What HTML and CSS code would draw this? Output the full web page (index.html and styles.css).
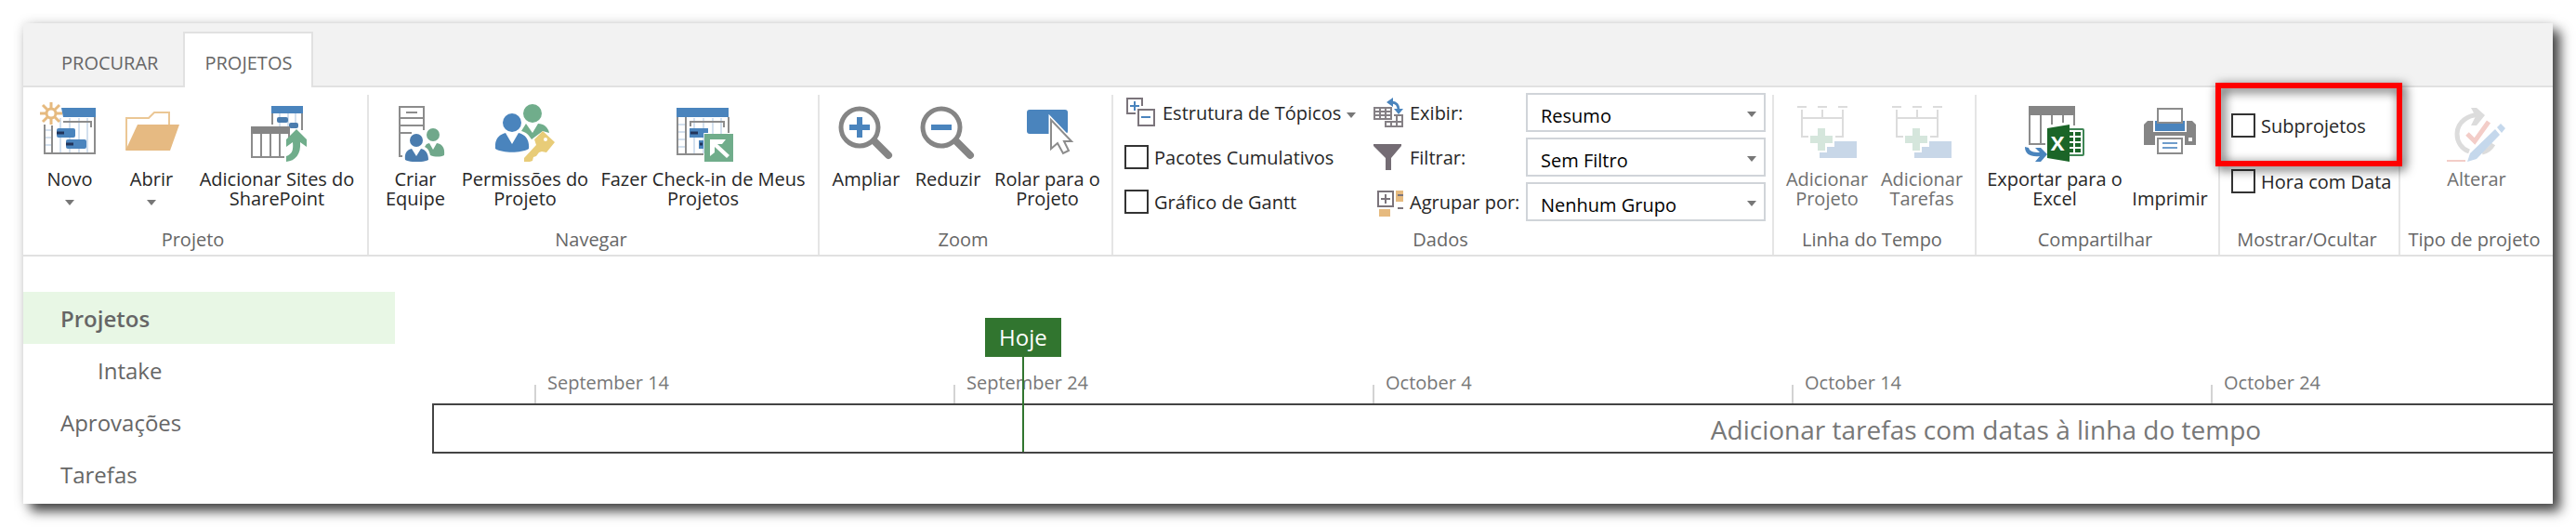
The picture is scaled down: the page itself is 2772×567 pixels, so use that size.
FILE: index.html
```html
<!DOCTYPE html>
<html lang="pt-BR">
<head>
    <meta charset="UTF-8">
    <meta name="viewport" content="width=device-width, initial-scale=1.0">
    <title>Projetos</title>
    <link rel="stylesheet" href="styles.css">
</head>
<body>

<div class="window">
    <nav class="tabs">
        <a href="#procurar">PROCURAR</a>
        <a href="#projetos" class="active">PROJETOS</a>
    </nav>

    <div class="ribbon">
        <!-- Projeto -->
        <section class="group">
            <div class="tools">
                <button class="tool w-small">
                    <svg viewBox="0 0 64 64">
                        <path d="M22 17v38M32 17v38M42 17v38M51 17v38M5 30h8M5 38h8M5 46h8" stroke="#d3e0ee" stroke-width="2"/>
                        <path d="M5 24v31h54V16M13 25v30" fill="none" stroke="#8c8c8c" stroke-width="2"/>
                        <path d="M25 21h30v6" fill="none" stroke="#8c8c8c" stroke-width="2"/>
                        <path d="M23 6h37v10H25z" fill="#4a84bd"/>
                        <rect x="18" y="28" width="20" height="10" rx="2" fill="#4a84bd"/>
                        <rect x="28" y="40" width="22" height="10" rx="2" fill="#4a84bd"/>
                        <path d="M18 33h8M28 45h8" stroke="#22345a" stroke-width="3"/>
                        <circle cx="12" cy="12" r="5" fill="#fff" stroke="#e6ba7f" stroke-width="3"/>
                        <path d="M12 0v6M12 18v6M0 12h6M18 12h6M3 3l5 5M16 16l5 5M21 3l-5 5M8 16l-5 5" stroke="#e6ba7f" stroke-width="3"/>
                    </svg>
                    <span>Novo</span>
                    <i class="arrow"></i>
                </button>
                <button class="tool w-small">
                    <svg viewBox="0 0 64 64">
                        <path d="M5 51V17h24l6-6h16v14" fill="none" stroke="#ebc795" stroke-width="2"/>
                        <path d="M17 24h45L52 52H4z" fill="#e6ba82"/>
                    </svg>
                    <span>Abrir</span>
                    <i class="arrow"></i>
                </button>
                <button class="tool w-sites">
                    <svg viewBox="0 0 64 64">
                        <path d="M35 12v14M44 12v14M52 12v14" stroke="#d3e0ee" stroke-width="2"/>
                        <path d="M27 12v12M59 12v18" stroke="#8c8c8c" stroke-width="2"/>
                        <path d="M26 4h34v8H26z" fill="#4a84bd"/>
                        <rect x="32" y="16" width="12" height="6" rx="2" fill="#4a7cae"/>
                        <rect x="45" y="22" width="10" height="6" rx="2" fill="#4a7cae"/>
                        <path d="M5 34v25h35M15 34v24M25 34v24M35 34v24M45 34v6" fill="none" stroke="#8c8c8c" stroke-width="2"/>
                        <path d="M4 26h42v8H4z" fill="#858585"/>
                        <path d="M53 29l11 11v8l-7-5c1 13-5 20-15 21v-6c6-2 8-6 7-15l-7 5v-8z" fill="#70ad8b"/>
                    </svg>
                    <span>Adicionar Sites do<br>SharePoint</span>
                </button>
            </div>
            <h2>Projeto</h2>
        </section>

        <!-- Navegar -->
        <section class="group">
            <div class="tools">
                <button class="tool w-small">
                    <svg viewBox="0 0 64 64">
                        <path d="M18 58h-3V5h26v25M15 17h26M15 25h26M15 33h13M22 11h12" fill="none" stroke="#8c8c8c" stroke-width="2"/>
                        <circle cx="51" cy="35" r="7" fill="#70a88b"/>
                        <path d="M44 45l3-1 4 7 4-7c6 1 9 5 8 13-4 2-10 2-15 0-1-5-3-8-6-9z" fill="#70a88b"/>
                        <circle cx="33" cy="41" r="7" fill="#4a7cae"/>
                        <path d="M21 62c-1-7 2-11 7-12l5 8 5-8c5 1 8 5 8 12-6 3-19 3-25 0z" fill="#4a7cae"/>
                    </svg>
                    <span>Criar<br>Equipe</span>
                </button>
                <button class="tool w-perm">
                    <svg viewBox="0 0 64 64">
                        <circle cx="40" cy="12" r="10" fill="#70ad8b"/>
                        <path d="M28 31l5-8 7 10 6-10c6 0 11 4 12 10l-7-2-12 9c-3-5-6-8-11-9z" fill="#70ad8b"/>
                        <circle cx="18" cy="22" r="10" fill="#4a84bd"/>
                        <path d="M0 50c-1-9 3-15 11-17l7 12 7-12c8 2 12 8 11 17-8 5-28 5-36 0z" fill="#4a84bd"/>
                        <path d="M51 31l13 12-9 11-5-1-3 1-3 4-3 1-1 4-3 1h-6v-4l13-14-2-6z" fill="#e8cc78"/>
                        <circle cx="54" cy="40" r="2" fill="#fff"/>
                    </svg>
                    <span>Permissões do<br>Projeto</span>
                </button>
                <button class="tool w-checkin">
                    <svg viewBox="0 0 64 64">
                        <path d="M22 17v38M32 17v38M42 17v18M51 17v18M5 24h8M5 32h8M5 40h8M5 48h8" stroke="#d3e0ee" stroke-width="2"/>
                        <path d="M4 16v40h28M13 16v39M59 16v17M18 26v-5h36v6" fill="none" stroke="#8c8c8c" stroke-width="2"/>
                        <path d="M3 6h56v10H3z" fill="#4a84bd"/>
                        <path d="M17 28h20v5h-5v5H17zM27 41h5v9h-5z" fill="#4a84bd"/>
                        <path d="M18 33h8M28 45h3" stroke="#22345a" stroke-width="3"/>
                        <path d="M33 34h31v30H33z" fill="#70ad8b"/>
                        <path d="M39 40h17l-4 5h-5l13 12-3 3-13-12v6l-5 4z" fill="#fff"/>
                    </svg>
                    <span>Fazer Check-in de Meus<br>Projetos</span>
                </button>
            </div>
            <h2>Navegar</h2>
        </section>

        <!-- Zoom -->
        <section class="group">
            <div class="tools">
                <button class="tool w-small">
                    <svg viewBox="0 0 64 64">
                        <circle cx="25" cy="27" r="20" fill="none" stroke="#858585" stroke-width="5"/>
                        <path d="M41 42l15 15" stroke="#858585" stroke-width="8" stroke-linecap="round"/>
                        <path d="M14 27h22M25 16v22" stroke="#4a84bd" stroke-width="6"/>
                    </svg>
                    <span>Ampliar</span>
                </button>
                <button class="tool w-small">
                    <svg viewBox="0 0 64 64">
                        <circle cx="25" cy="27" r="20" fill="none" stroke="#858585" stroke-width="5"/>
                        <path d="M41 42l15 15" stroke="#858585" stroke-width="8" stroke-linecap="round"/>
                        <path d="M14 27h22" stroke="#4a84bd" stroke-width="6"/>
                    </svg>
                    <span>Reduzir</span>
                </button>
                <button class="tool w-scroll">
                    <svg viewBox="0 0 64 64">
                        <rect x="10" y="8" width="44" height="26" rx="3" fill="#4a84bd"/>
                        <path d="M36 19v31l7-6 6 11 6-3-5-10h8z" fill="#fff" stroke="#fff" stroke-width="5"/>
                        <path d="M36 19v31l7-6 6 11 6-3-5-10h8z" fill="#fff" stroke="#8c8c8c" stroke-width="2"/>
                    </svg>
                    <span>Rolar para o<br>Projeto</span>
                </button>
            </div>
            <h2>Zoom</h2>
        </section>

        <!-- Dados -->
        <section class="group data">
            <div class="data-rows">
                <div class="column options">
                    <button class="row outline">
                        <svg viewBox="0 0 32 32">
                            <path d="M10 17H1V1h16v8" fill="none" stroke="#7b747b" stroke-width="2"/>
                            <path d="M4 9h10M9 4v10M16 21h10" stroke="#4a84bd" stroke-width="2"/>
                            <path d="M13 13h17v17H13z" fill="none" stroke="#7b747b" stroke-width="2"/>
                        </svg>
                        <span>Estrutura de Tópicos</span>
                        <i class="arrow"></i>
                    </button>
                    <label class="row"><input type="checkbox">Pacotes Cumulativos</label>
                    <label class="row"><input type="checkbox">Gráfico de Gantt</label>
                </div>
                <div class="column filters">
                    <div class="row">
                        <svg viewBox="0 0 32 32">
                            <path d="M1 11h18v12H1zM1 15h18M1 19h18M7 11v12M13 11v12" fill="none" stroke="#858085" stroke-width="2"/>
                            <path d="M22 19h9v12H13v-5h18M25 19v12M19 26v5" fill="none" stroke="#858085" stroke-width="2"/>
                            <path d="M19 5c6 0 8 3 8 9" fill="none" stroke="#4a84bd" stroke-width="3"/>
                            <path d="M14 5l7-5v10zM27 18l-5-6h10z" fill="#4a84bd"/>
                        </svg>
                        <label for="exibir">Exibir:</label>
                        <div class="select">
                            <select id="exibir"><option>Resumo</option></select>
                        </div>
                    </div>
                    <div class="row">
                        <svg viewBox="0 0 32 32">
                            <path d="M0 2h30v2L19 17v13h-6V17L0 4z" fill="#746c74"/>
                        </svg>
                        <label for="filtrar">Filtrar:</label>
                        <div class="select">
                            <select id="filtrar"><option>Sem Filtro</option></select>
                        </div>
                    </div>
                    <div class="row">
                        <svg viewBox="0 0 32 32">
                            <path d="M5 5h16v16H5zM8 13h10M13 8v10" fill="none" stroke="#7b747b" stroke-width="2"/>
                            <path d="M24 4h8v12h-8zM6 24h12v8H6z" fill="#e6ba7f"/>
                            <path d="M26 9h6M26 23h6" stroke="#7b747b" stroke-width="2"/>
                        </svg>
                        <label for="agrupar">Agrupar por:</label>
                        <div class="select">
                            <select id="agrupar"><option>Nenhum Grupo</option></select>
                        </div>
                    </div>
                </div>
            </div>
            <h2>Dados</h2>
        </section>

        <!-- Linha do Tempo -->
        <section class="group">
            <div class="tools">
                <button class="tool w-add" disabled>
                    <svg viewBox="0 0 64 64">
                        <path d="M0 5h10M22 5h10M44 5h10M5 8v29h7M27 8v9M49 8v29h-8M5 17h44" fill="none" stroke="#dcdcdc" stroke-width="2"/>
                        <path d="M22 28h8v8h8v8h-8v8h-8v-8h-8v-8h8z" fill="#d5e6dc"/>
                        <path d="M40 42h24v18H24v-6h8v-6h8z" fill="#c8d7e8"/>
                    </svg>
                    <span>Adicionar<br>Projeto</span>
                </button>
                <button class="tool w-add" disabled>
                    <svg viewBox="0 0 64 64">
                        <path d="M0 5h10M22 5h10M44 5h10M5 8v29h7M27 8v9M49 8v29h-8M5 17h44" fill="none" stroke="#dcdcdc" stroke-width="2"/>
                        <path d="M22 28h8v8h8v8h-8v8h-8v-8h-8v-8h8z" fill="#d5e6dc"/>
                        <path d="M40 42h24v18H24v-6h8v-6h8z" fill="#c8d7e8"/>
                    </svg>
                    <span>Adicionar<br>Tarefas</span>
                </button>
            </div>
            <h2>Linha do Tempo</h2>
        </section>

        <!-- Compartilhar -->
        <section class="group">
            <div class="tools">
                <button class="tool w-excel">
                    <svg viewBox="0 0 64 64">
                        <path d="M5 13v32h17M17 13v31M29 13v11M41 13v9M53 13v12" fill="none" stroke="#8c8c8c" stroke-width="2"/>
                        <path d="M4 4h50v10H4z" fill="#858585"/>
                        <rect x="46" y="29" width="17" height="28" rx="1" fill="#fff" stroke="#3f8555" stroke-width="2"/>
                        <path d="M48 34h4M48 40h4M48 46h4M48 52h4M54 34h6M54 40h6M54 46h6M54 52h6" stroke="#1b6528" stroke-width="4"/>
                        <path d="M24 28l24-4v40l-24-4z" fill="#1b6528"/>
                        <text x="35" y="52" font-size="22" font-weight="bold" text-anchor="middle" fill="#fff">X</text>
                        <path d="M0 48l4 1c1 4 5 5 12 5l-5-5h6l7 7-7 8h-6l5-6C6 59 0 56 0 48z" fill="#4a84bd"/>
                    </svg>
                    <span>Exportar para o<br>Excel</span>
                </button>
                <button class="tool w-print">
                    <svg viewBox="0 0 64 64">
                        <path d="M8 20h48l4 4v22H4V24z" fill="#858585"/>
                        <path d="M14 18h36v14H14z" fill="#fff"/>
                        <path d="M16 20h32v11H16z" fill="#4a84bd"/>
                        <path d="M19 7h26v15H19z" fill="#fff" stroke="#8c8c8c" stroke-width="2"/>
                        <path d="M16 36h32v10H16z" fill="#fff"/>
                        <path d="M19 39h26v16H19z" fill="#fff" stroke="#8c8c8c" stroke-width="2"/>
                        <path d="M24 44h16M24 49h16" stroke="#6f9ccb" stroke-width="2"/>
                        <path d="M52 38h4v4h-4z" fill="#fff"/>
                    </svg>
                    <span><br>Imprimir</span>
                </button>
            </div>
            <h2>Compartilhar</h2>
        </section>

        <!-- Mostrar/Ocultar -->
        <section class="group show">
            <div class="column checks">
                <label class="row"><input type="checkbox">Subprojetos</label>
                <label class="row"><input type="checkbox">Hora com Data</label>
            </div>
            <h2>Mostrar/Ocultar</h2>
            <div class="highlight"></div>
        </section>

        <!-- Tipo de projeto -->
        <section class="group last">
            <div class="tools">
                <button class="tool w-small" disabled>
                    <svg viewBox="0 0 64 64">
                        <path d="M37 14c-14-2-26 8-26 20 0 9 5 16 13 19M50 45c-3 5-7 8-12 9" fill="none" stroke="#dcdcdc" stroke-width="5"/>
                        <path d="M26 6h6l9 8-9 11h-6l5-10z" fill="#dcdcdc"/>
                        <path d="M22 34l8 8 15-21" fill="none" stroke="#f3cdc8" stroke-width="5"/>
                        <path d="M54 27l4-4 5 5-4 5zM52 29l5 6-25 26-10 3 3-9z" fill="#c5d8ec"/>
                        <path d="M0 63h20" stroke="#f3cdc8" stroke-width="2"/>
                    </svg>
                    <span>Alterar</span>
                </button>
            </div>
            <h2>Tipo de projeto</h2>
        </section>
    </div>

    <div class="content">
        <nav class="side-nav">
            <a href="#projetos" class="active">Projetos</a>
            <a href="#intake" class="sub">Intake</a>
            <a href="#aprovacoes">Aprovações</a>
            <a href="#tarefas">Tarefas</a>
        </nav>

        <main class="timeline-pane">
            <div class="timeline">
                <div class="dates">
                    <div class="date"><span>September 14</span></div>
                    <div class="date"><span>September 24</span></div>
                    <div class="date"><span>October 4</span></div>
                    <div class="date"><span>October 14</span></div>
                    <div class="date"><span>October 24</span></div>
                </div>
                <div class="bar">Adicionar tarefas com datas à linha do tempo</div>
                <div class="today"><span>Hoje</span></div>
            </div>
        </main>
    </div>
</div>

</body>
</html>
```
FILE: styles.css
```css
* {
    box-sizing: border-box;
}
body {
    margin: 0;
    padding: 25px;
    background-color: #fff;
    font-family: "Open Sans", "Noto Sans", sans-serif;
    font-size: 20px;
    color: #262626;
    overflow: hidden;
}
a {
    text-decoration: none;
    color: #666;
}
button {
    border: none;
    background: none;
    padding: 0;
    font: inherit;
    color: inherit;
}
button:disabled {
    color: #6f6f6f;
}
.window {
    background-color: #fff;
    box-shadow: 8px 8px 12px rgba(0, 0, 0, 0.72), 0 0 12px rgba(0, 0, 0, 0.12);
}

/* tabs */
.tabs {
    display: flex;
    align-items: flex-end;
    height: 69px;
    padding-left: 18px;
    background-color: #f2f2f2;
    border-bottom: 2px solid #e1e1e1;
}
.tabs a {
    height: 58px;
    padding: 8px 21px 0;
    line-height: 48px;
    border: 2px solid transparent;
    border-bottom: none;
}
.tabs .active {
    height: 60px;
    margin-bottom: -2px;
    margin-left: 4px;
    background-color: #fff;
    border-color: #e1e1e1;
}

/* ribbon */
.ribbon {
    display: flex;
    padding-top: 8px;
    border-bottom: 2px solid #e1e1e1;
}
.group {
    display: flex;
    flex-direction: column;
    flex-shrink: 0;
    height: 172px;
    padding: 0 6px;
    border-right: 2px solid #e5e5e5;
}
.group h2 {
    margin: auto 0 0;
    padding-right: 5px;
    font-size: 20px;
    font-weight: normal;
    line-height: 32px;
    text-align: center;
    white-space: nowrap;
    color: #666;
}
.tools {
    display: flex;
    align-items: flex-start;
    padding-top: 8px;
}
.tool {
    display: flex;
    flex-direction: column;
    align-items: center;
    line-height: 21px;
    white-space: nowrap;
}
.tool svg {
    width: 64px;
    height: 64px;
    margin-bottom: 8px;
}
.w-small {
    width: 88px;
}
.w-sites {
    width: 182px;
}
.w-perm {
    width: 148px;
}
.w-checkin {
    width: 235px;
}
.w-scroll {
    width: 126px;
}
.w-add {
    width: 102px;
}
.w-excel {
    width: 156px;
}
.w-print {
    width: 92px;
}
.arrow {
    width: 0;
    border: 5px solid transparent;
    border-top: 6px solid #777;
    border-bottom: none;
}
.tool .arrow {
    margin-top: 12px;
}

/* rows with checkboxes and selects */
.data {
    width: 711px;
}
.data-rows {
    display: flex;
    justify-content: space-between;
    margin-top: -2px;
    padding: 0 1px 0 6px;
}
.column {
    display: flex;
    flex-direction: column;
    gap: 6px;
}
.row {
    display: flex;
    align-items: center;
    height: 42px;
    white-space: nowrap;
}
.row svg {
    width: 32px;
    height: 32px;
    margin-right: 7px;
}
.outline {
    padding-left: 2px;
}
.outline .arrow {
    margin: 6px 0 0 6px;
}
.row input {
    appearance: none;
    width: 26px;
    height: 26px;
    margin: 0 6px 0 0;
    border: 2px solid #333;
    background-color: #fff;
}
.filters label {
    width: 125px;
}
.select {
    position: relative;
    width: 258px;
}
.select::after {
    content: "";
    position: absolute;
    top: 20px;
    right: 10px;
    border: 5px solid transparent;
    border-top: 6px solid #777;
    border-bottom: none;
    pointer-events: none;
}
.select select {
    appearance: none;
    width: 100%;
    height: 42px;
    padding: 6px 14px 0;
    border: 2px solid #d0d4d9;
    border-radius: 0;
    background-color: #fff;
    font: inherit;
    color: #000;
}
.show {
    position: relative;
    width: 194px;
}
.checks {
    gap: 18px;
    padding: 12px 0 0 6px;
}
.highlight {
    position: absolute;
    top: -13px;
    left: -5px;
    width: 201px;
    height: 90px;
    border: 6px solid #f00;
    filter: drop-shadow(3px 3px 6px rgba(0, 0, 0, 0.8));
    pointer-events: none;
}
.last {
    flex: 1;
    align-items: center;
    border-right: none;
}

/* content */
.content {
    display: flex;
    padding-top: 38px;
}
.side-nav {
    display: flex;
    flex-direction: column;
    width: 400px;
    margin-right: 40px;
    padding-bottom: 4px;
}
.side-nav a {
    height: 56px;
    padding-left: 40px;
    font-size: 24px;
    line-height: 58px;
}
.side-nav .active {
    font-weight: 600;
    background-color: #e8f7e5;
}
.side-nav .sub {
    padding-left: 80px;
}
.timeline-pane {
    flex: 1;
    min-width: 0;
    overflow: hidden;
}
/* wider than the pane, the rest is cut off */
.timeline {
    position: relative;
    width: 3344px;
    padding-top: 80px;
}
.dates {
    display: flex;
    padding-left: 110px;
    color: #777;
}
.date {
    display: flex;
    align-items: flex-end;
    width: 451px;
    height: 40px;
}
.date::before {
    content: "";
    width: 2px;
    height: 20px;
    margin-right: 12px;
    background-color: #d3d3d3;
}
.date span {
    margin-bottom: 9px;
    line-height: 26px;
}
.bar {
    height: 54px;
    border: 2px solid #444;
    font-size: 28px;
    line-height: 52px;
    text-align: center;
    color: #777;
}
.today {
    position: absolute;
    top: 28px;
    left: 595px;
    display: flex;
    flex-direction: column;
    align-items: center;
    height: 144px;
}
.today span {
    padding: 0 15px;
    font-size: 24px;
    line-height: 42px;
    color: #fff;
    background-color: #31752f;
}
.today::after {
    content: "";
    flex: 1;
    width: 2px;
    background-color: #31752f;
}
```
